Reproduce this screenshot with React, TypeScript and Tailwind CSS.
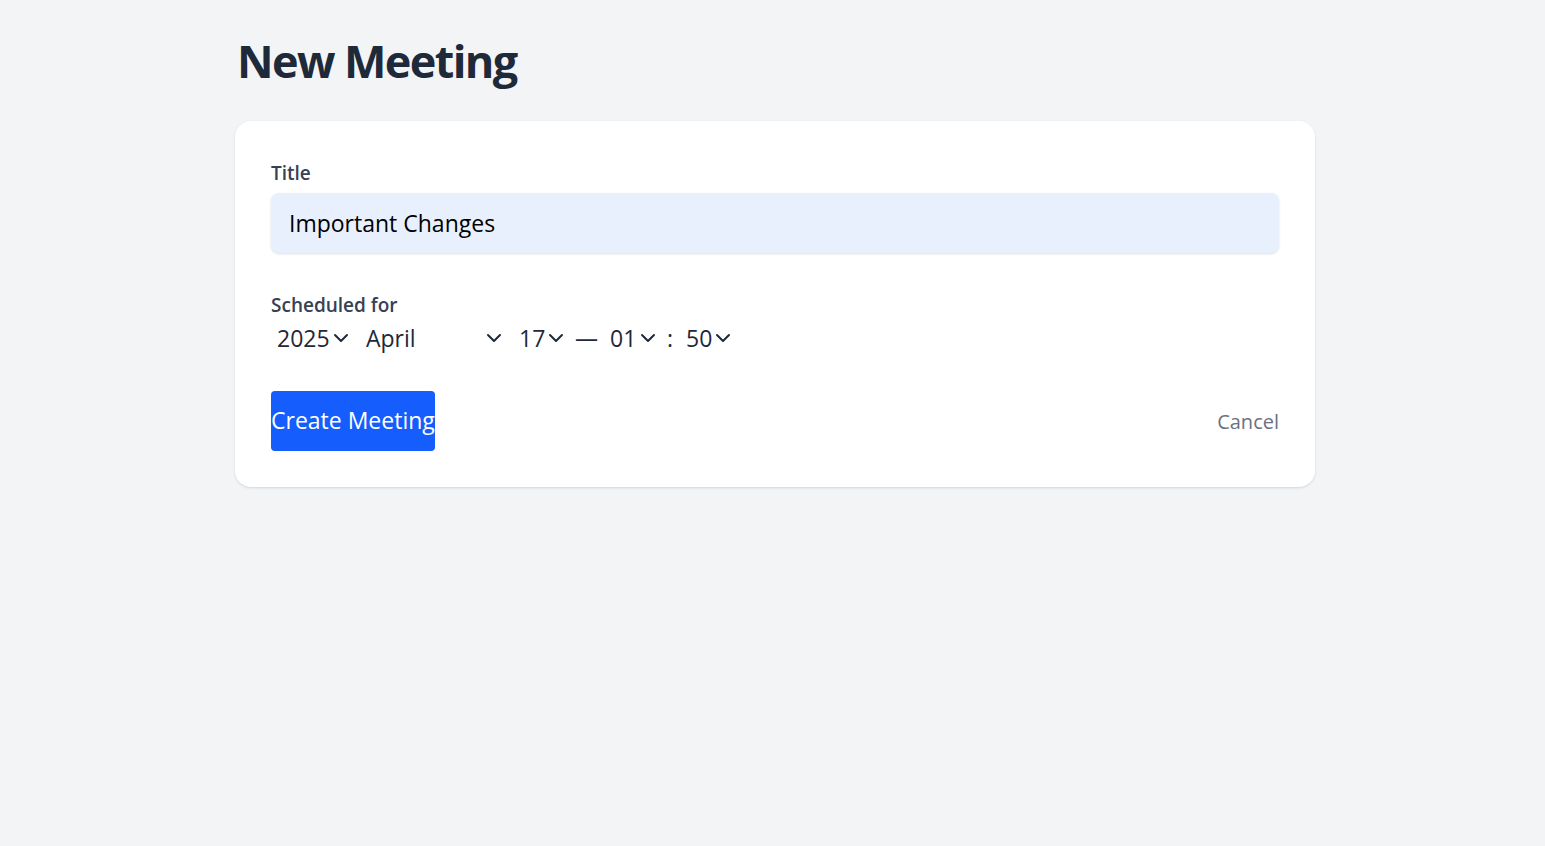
import { ChevronDown } from "lucide-react";

interface PickerProps {
  value: string;
  options: string[];
  width: string;
}

const Picker = ({ value, options, width }: PickerProps) => (
  <div className={`relative shrink-0 ${width}`}>
    <select
      defaultValue={value}
      className="w-full appearance-none bg-transparent pl-[6px] text-[23px] leading-8 text-gray-800 outline-none"
    >
      {options.map((o) => (
        <option key={o}>{o}</option>
      ))}
    </select>
    <ChevronDown
      className="pointer-events-none absolute right-[1px] top-1/2 h-6 w-6 -translate-y-1/2 text-gray-800"
      strokeWidth={2}
    />
  </div>
);

const months = [
  "January", "February", "March", "April", "May", "June",
  "July", "August", "September", "October", "November", "December",
];
const pad = (n: number) => String(n).padStart(2, "0");

export default function App() {
  return (
    <div className="min-h-screen bg-gray-100 font-['Open_Sans',sans-serif]">
      <div className="ml-[235px] w-[1080px] pt-[37px]">
        <h1 className="pl-[2px] text-[45px] font-bold leading-[48px] tracking-[-1.6px] text-gray-800">New Meeting</h1>

        <form className="mt-[36px] rounded-2xl bg-white px-9 pb-9 pt-[38px] shadow-sm">
          <label className="block text-[19px] font-semibold leading-7 text-gray-700">Title</label>
          <input
            defaultValue="Important Changes"
            className="mt-[6px] block h-[60px] w-full rounded-lg bg-[#e8f0fe] px-[18px] text-[23px] text-black shadow-sm outline-none"
          />

          <label className="mt-[38px] block text-[19px] font-semibold leading-7 text-gray-700">Scheduled for</label>
          <div className="mt-[2px] flex items-center text-[23px] text-gray-800">
            <Picker value="2025" options={["2024", "2025", "2026"]} width="w-[83px]" />
            <div className="w-[6px] shrink-0" />
            <Picker value="April" options={months} width="w-[147px]" />
            <div className="w-[6px] shrink-0" />
            <Picker value="17" options={Array.from({ length: 31 }, (_, i) => String(i + 1))} width="w-[56px]" />
            <span className="ml-[6px] mr-[6px] leading-8">—</span>
            <Picker value="01" options={Array.from({ length: 24 }, (_, i) => pad(i))} width="w-[57px]" />
            <span className="ml-[6px] mr-[7px] leading-8">:</span>
            <Picker value="50" options={Array.from({ length: 60 }, (_, i) => pad(i))} width="w-[56px]" />
          </div>

          <div className="mt-[35px] flex items-center justify-between">
            <button
              type="button"
              className="h-[60px] whitespace-nowrap rounded bg-[#155dfc] text-[23px] text-white"
            >
              Create Meeting
            </button>
            <button type="button" className="pt-[3px] text-xl text-gray-500">
              Cancel
            </button>
          </div>
        </form>
      </div>
    </div>
  );
}
